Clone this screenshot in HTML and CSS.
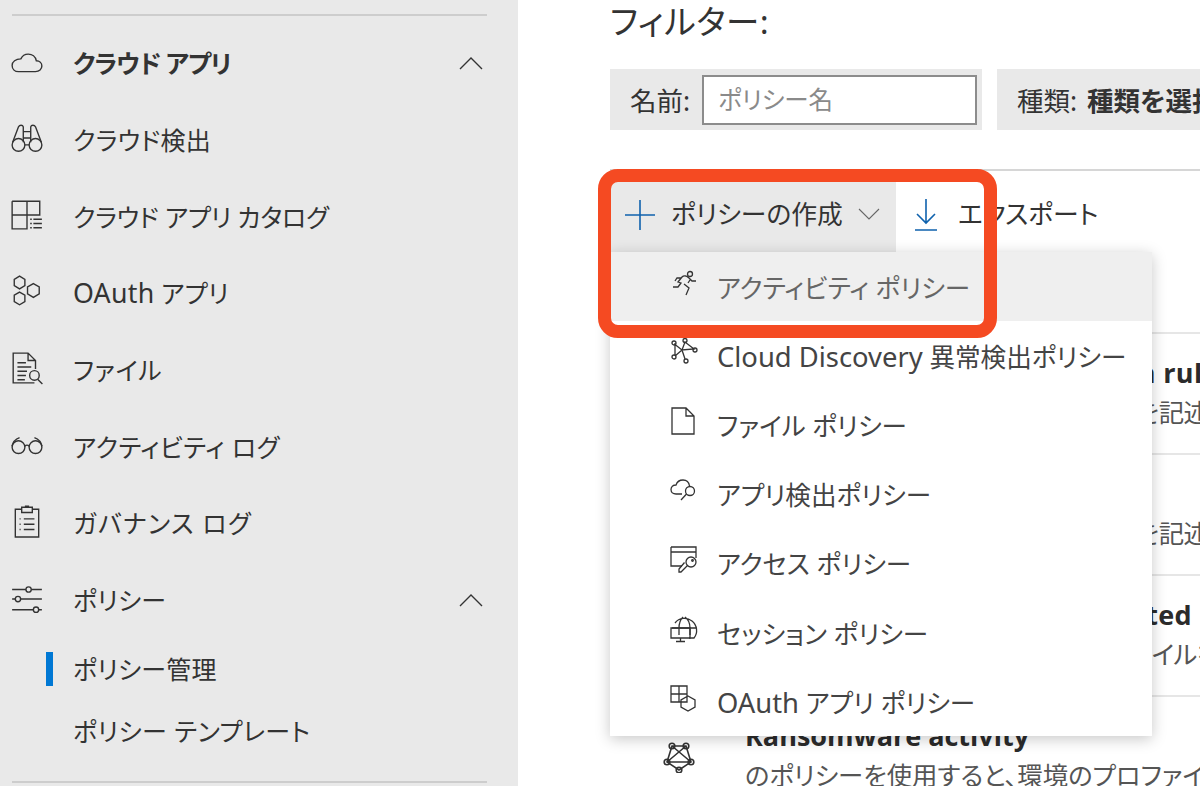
FILE: index.html
```html
<!DOCTYPE html>
<html lang="ja">
<head>
<meta charset="utf-8">
<title>ポリシー管理</title>
<link rel="stylesheet" href="styles.css">
</head>
<body>
<aside class="sidebar">
  <hr class="rule rule-top">
  <nav class="nav">
    <a class="nav-row nav-strong"><svg class="ico" viewBox="0 0 32 32"><path d="M8 26h16c3.500 0 6-2.300 6-5.200 0-2.900-2.300-5-5.200-5-.8-3.900-4-6.300-7.600-6.300-3.100 0-5.800 1.800-7 4.500C5.400 14 2 16.500 2 20.200 2 23.700 4.600 26 8 26z"/></svg><span class="nav-text">クラウド アプリ</span><svg class="chev" viewBox="0 0 24 14"><path d="M1 13 12 2l11 11"/></svg></a>
    <a class="nav-row"><svg class="ico" viewBox="0 0 32 32"><circle cx="8" cy="22.500" r="6"/><circle cx="24" cy="22.500" r="6"/><path d="M2.500 20 8 5.500c1-2 4-2 4.500 0V20M29.500 20 24 5.500c-1-2-4-2-4.500 0V20M12.500 10h7M12.500 16h7M14 22.500h4"/></svg><span class="nav-text">クラウド検出</span></a>
    <a class="nav-row"><svg class="ico" viewBox="0 0 32 32"><path d="M2 4h26v13H2M2 4v26h14V4"/><path class="thin" d="M19 21h1.500M22 21h8M19 25h1.500M22 25h8M19 29h1.500M22 29h8"/></svg><span class="nav-text nav-tight">クラウド アプリ カタログ</span></a>
    <a class="nav-row"><svg class="ico" viewBox="0 0 32 32"><path d="M9 2l5 3v6l-5 3-5-3V5zM9 17l5 3v6l-5 3-5-3v-6zM22 9l5.500 3.200v6.400L22 22l-5.500-3.400v-6.400z"/></svg><span class="nav-text"><span class="latin">OAuth</span> アプリ</span></a>
    <a class="nav-row"><svg class="ico" viewBox="0 0 32 32"><path d="M24 17V9l-7-7H3v28h20M17 2v7h7M7 11h8M7 15h13M7 19h9M7 23h8M7 27h7"/><circle cx="23" cy="23" r="4.500"/><path d="M26 26.500l4.500 4.500"/></svg><span class="nav-text nav-wide">ファイル</span></a>
    <a class="nav-row"><svg class="ico" viewBox="0 0 32 32"><circle cx="8" cy="19" r="6"/><circle cx="24" cy="19" r="6"/><path d="M14 18c1.300-1.200 2.700-1.200 4 0M2 18c.6-3.500 3-6.500 7-8M30 18c-.6-3.500-3-6.500-7-8"/></svg><span class="nav-text nav-mid">アクティビティ ログ</span></a>
    <a class="nav-row"><svg class="ico" viewBox="0 0 32 32"><path d="M11 5H5v26h22V5h-6M11 3h10v5H11zM14 2h4M9 14h1M13 14h10M9 19h1M13 19h10M9 24h1M13 24h10"/></svg><span class="nav-text nav-wider">ガバナンス ログ</span></a>
    <a class="nav-row"><svg class="ico" viewBox="0 0 32 32"><path d="M2 8h13M20 8h10M2 17h3M10 17h20M2 27h20M27 27h3"/><circle cx="17.500" cy="8" r="2.500"/><circle cx="7.500" cy="17" r="2.500"/><circle cx="24.500" cy="27" r="2.500"/></svg><span class="nav-text">ポリシー</span><svg class="chev" viewBox="0 0 24 14"><path d="M1 13 12 2l11 11"/></svg></a>
    <a class="nav-sub nav-active"><span class="nav-text">ポリシー管理</span></a>
    <a class="nav-sub"><span class="nav-text nav-mid">ポリシー テンプレート</span></a>
  </nav>
  <hr class="rule rule-bottom">
</aside>
<main class="main">
  <h2 class="filter-title">フィルター:</h2>
  <div class="filters">
    <div class="chip chip-name"><span>名前:</span><input class="name-input" placeholder="ポリシー名"></div>
    <div class="chip chip-type"><span>種類:</span> <b>種類を選択</b></div>
  </div>
  <div class="toolbar">
    <button class="tool tool-open"><svg class="tool-ico" viewBox="0 0 30 30"><path class="blue" d="M15 0v30M0 15h30"/></svg><span class="tool-label">ポリシーの作成</span><svg class="tool-chev" viewBox="0 0 22 12"><path d="M1 1l10 10L21 1"/></svg></button>
    <button class="tool"><svg class="tool-dl" viewBox="0 0 22 32"><path class="blue" d="M11 0v24M2 15l9 9 9-9M0 31h22"/></svg><span class="tool-label tool-export">エクスポート</span></button>
  </div>
  <section class="list">
    <article class="row row-rule"><p class="row-title">Cloud apps' storage detection rule</p><p class="row-sub">のポリシーを使用すると、環境の規則を記述できます</p></article>
    <article class="row row-rule"><p class="row-title">Logon activity</p><p class="row-sub">のポリシーを使用すると、環境の規則を記述できます</p></article>
    <article class="row row-rule"><p class="row-title">File containing PII data detected</p><p class="row-sub">のポリシーを使用すると、全環境のファイルを検出します</p></article>
    <article class="row row-icon">
      <svg class="row-ico" viewBox="0 0 32 32"><path d="M9 5h14l5 16-12 8-12-8zM9 5l19 16M23 5 4 21M4 21h24"/><circle cx="9" cy="5" r="2.800"/><circle cx="23" cy="5" r="2.800"/><circle cx="4" cy="21" r="2.800"/><circle cx="28" cy="21" r="2.800"/><circle cx="16" cy="29" r="2.800"/></svg>
      <p class="row-title">Ransomware activity</p><p class="row-sub">のポリシーを使用すると、環境のプロファイルを検出します</p>
    </article>
  </section>
  <ul class="menu">
    <li class="menu-item menu-hover"><svg class="menu-ico" viewBox="0 0 28 28"><circle cx="20" cy="5" r="2.500"/><path d="M3 18h5l3-4-3-1 4-5c2-2 5-1 7 1l3 3h4M14 15l5 4-3 7M11 9H7L5 12M18 14l2-3"/></svg><span>アクティビティ ポリシー</span></li>
    <li class="menu-item"><svg class="menu-ico" viewBox="0 0 28 28"><circle cx="4" cy="5" r="2"/><circle cx="4" cy="19" r="2"/><circle cx="15" cy="2.500" r="2"/><circle cx="25" cy="12" r="2"/><circle cx="16" cy="23" r="2"/><path d="M5 6.500l7 5.500-7 6M5 5v12M12 12l3-8 9 7-12 1zM12 12l3 9"/></svg><span><span class="latin">Cloud Discovery</span> 異常検出ポリシー</span></li>
    <li class="menu-item"><svg class="menu-ico" viewBox="0 0 28 28"><path d="M2 1h14l8 8v18H2zM16 1v8h8"/></svg><span>ファイル ポリシー</span></li>
    <li class="menu-item"><svg class="menu-ico" viewBox="0 0 28 28"><path d="M12 18H6c-3 0-5-2-5-4.500S3 9 6 9c1-3 3.500-5 7-5s6 2.500 6.500 6"/><circle cx="20" cy="15" r="4.500"/><path d="M16.500 18 11 24"/></svg><span>アプリ検出ポリシー</span></li>
    <li class="menu-item"><svg class="menu-ico" viewBox="0 0 28 28"><path d="M1 2h25v11M1 2v19h11M1 7h25"/><circle cx="21" cy="17" r="5"/><circle cx="22.500" cy="15.500" r=".8"/><path d="M17.500 20.500 11 27H9v-3l5.500-6.500"/></svg><span>アクセス ポリシー</span></li>
    <li class="menu-item"><svg class="menu-ico" viewBox="0 0 28 28"><path d="M5 8a11.500 11.500 0 1 1 19 15h-5M2 13h24M13 2c-3 3-4 7-4 11v7M15 2c4 3 5 7 5 11v7"/><path d="M1 13h19v10H1zM6 26.500h9M10.500 23v3.500"/></svg><span>セッション ポリシー</span></li>
    <li class="menu-item"><svg class="menu-ico" viewBox="0 0 28 28"><path d="M1 2h16v16H1zM1 10h16M9 2v16M18 12l7 4v7l-7 4-7-4v-7z"/></svg><span><span class="latin">OAuth</span> アプリ ポリシー</span></li>
  </ul>
  <div class="callout"></div>
</main>
</body>
</html>
```

FILE: styles.css
```css
* { box-sizing: border-box; }
html, body { margin: 0; height: 786px; overflow: hidden; }
body {
  display: flex;
  background: #fff;
  color: #333;
  font-family: "Noto Sans", "Noto Sans CJK JP", sans-serif;
  font-size: 25px;
  font-feature-settings: "palt";
}
svg { fill: none; stroke: #333; stroke-width: 1.3; flex: none; display: block; }
svg .blue { stroke: #0f62ad; stroke-width: 1.6; }
.latin { font-size: 1.07em; }

.sidebar { width: 518px; flex: none; height: 786px; background: #e9e9e9; padding: 14px 31px 0 12px; }
.rule { height: 2px; margin: 0; border: 0; background: #cdcdcd; }
.nav { margin-top: 8.500px; }
.nav-row { display: flex; align-items: center; height: 76.700px; }
.ico { width: 34px; height: 34px; margin: 0 29px 4px -2px; }
.ico .thin { stroke-width: 1.5; }
.nav-text { flex: 1; white-space: nowrap; letter-spacing: .25px; padding-top: 1px; line-height: 34px; }
.nav-tight { letter-spacing: -.2px; }
.nav-mid { letter-spacing: .5px; }
.nav-wide { letter-spacing: .7px; }
.nav-wider { letter-spacing: 1.2px; }
.nav-strong .nav-text { font-weight: 700; letter-spacing: -.95px; }
.chev { width: 24px; height: 14px; stroke-width: 1.4; margin-right: 4px; }
.nav-sub { display: flex; align-items: center; height: 62px; padding-left: 61px; position: relative; }
.nav-sub .nav-text { padding-top: 0; }
.nav-active::before { content: ""; position: absolute; left: 34px; top: 14px; width: 7px; height: 34px; background: #0078d4; }
.rule-bottom { margin-top: 19px; }

.main { flex: 1; min-width: 0; position: relative; padding-left: 92px; }
.filter-title { margin: 0; height: 69px; padding-top: 1px; font-size: 33.500px; letter-spacing: .6px; line-height: 40px; font-weight: 400; }
.filters { display: flex; gap: 15px; height: 61px; white-space: nowrap; font-size: 26.500px; }
.chip { background: #e9e9e9; display: flex; align-items: center; height: 61px; padding: 0 20px; gap: 12px; }
.chip-name { width: 372px; padding-right: 5px; }
.chip-type { flex: 1; gap: 10px; }
.chip b { font-weight: 700; }
.name-input { width: 275px; height: 50px; border: 2px solid #8c8c8c; padding: 0 14px; font: inherit; font-size: 24.500px; font-feature-settings: "palt"; background: #fff; outline: 0; }
.name-input::placeholder { color: #8a8a8a; opacity: 1; }
.toolbar { margin-top: 39px; border-top: 2px solid #d6d6d6; padding-top: 11px; height: 83px; display: flex; }
.tool { display: flex; align-items: center; height: 70px; border: 0; background: none; padding: 0 0 0 15px; font: inherit; font-size: 25.800px; color: #333; font-feature-settings: "palt"; }
.tool-open { width: 286px; background: #e9e9e9; }
.tool-label { padding-bottom: 6px; line-height: 36px; }
.tool-ico { width: 30px; height: 30px; margin: 0 16px 4px 0; }
.tool-chev { width: 22px; height: 12px; margin: 0 0 6px 15px; stroke: #666; stroke-width: 1.1; }
.tool-dl { width: 22px; height: 32px; margin: 0 21px 5px 4px; }

.list { margin-top: 80px; }
.row { height: 121px; border-top: 2px solid #e6e6e6; padding: 20px 0 0 135px; white-space: nowrap; overflow: hidden; position: relative; }
.row-title { margin: 0; font: 700 27px/38px "Open Sans", "Noto Sans CJK JP", sans-serif; color: #2b2b2b; height: 39px; }
.row-sub { margin: 0; height: 38px; line-height: 38px; font-size: 25.400px; color: #555; }
.row-rule .row-title { letter-spacing: .38px; }
.row-rule .row-sub { letter-spacing: -.45px; }
.row-ico { position: absolute; left: 53px; top: 44px; width: 32px; height: 32px; stroke-width: 1.6; }

.menu { position: absolute; left: 92px; top: 252px; width: 542px; height: 484px; margin: 0; padding: 0; list-style: none; background: #fff; box-shadow: 0 3px 14px rgba(0,0,0,.22); }
.menu-item { height: 69.200px; display: flex; align-items: center; padding-left: 60px; color: #444; white-space: nowrap; font-size: 25.600px; }
.menu-hover { background: #efefef; color: #666; }
.menu-ico { width: 28px; height: 28px; margin-right: 19px; transform: translateY(-4px); }

.callout { position: absolute; left: 80px; top: 169px; width: 399px; height: 169px; border: 13px solid #f54a22; border-radius: 20px; pointer-events: none; }
```
